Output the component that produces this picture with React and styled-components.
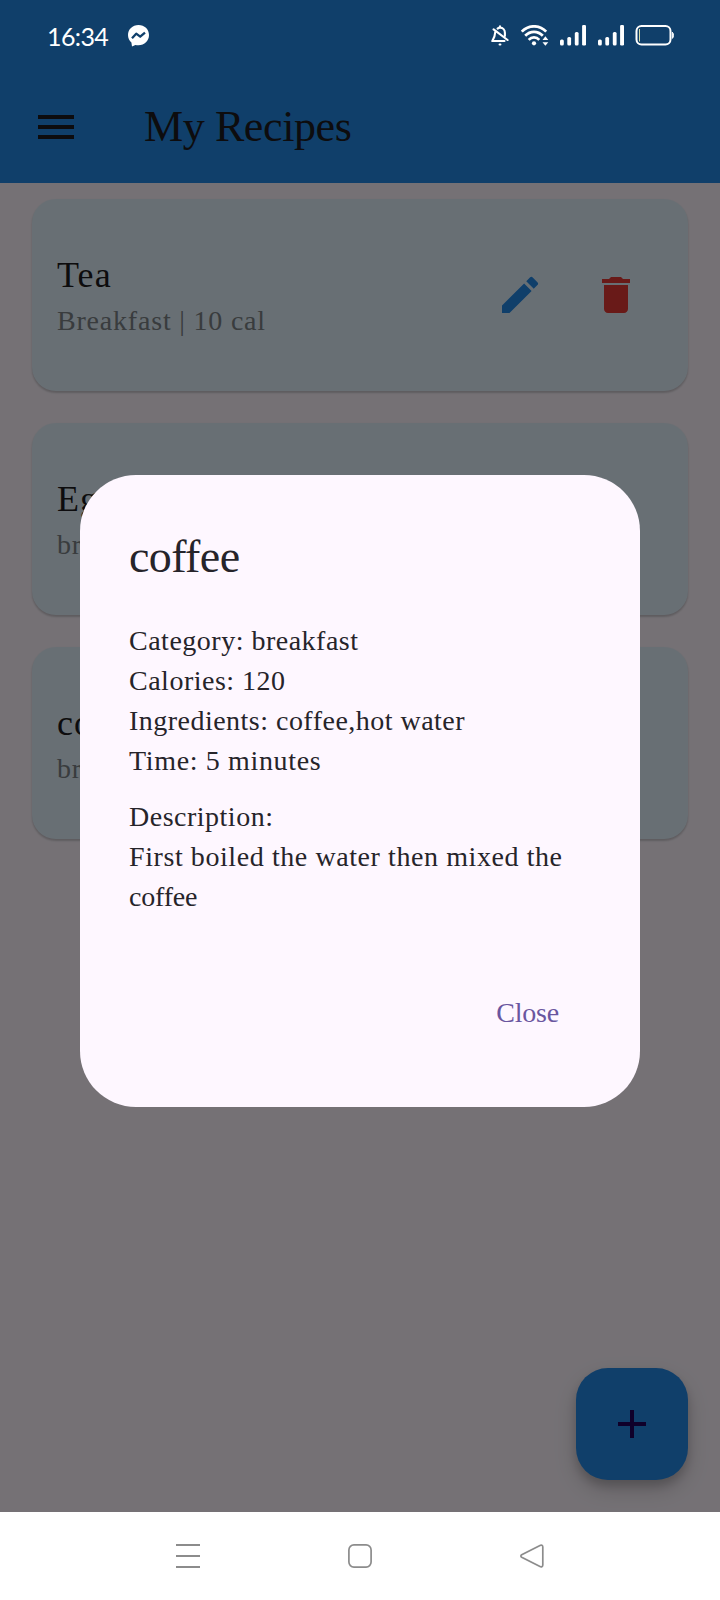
import React from 'react';
import styled, { createGlobalStyle } from 'styled-components';
import { MdAdd, MdDelete, MdEdit, MdMenu } from 'react-icons/md';

const GlobalStyle = createGlobalStyle`
  * { box-sizing: border-box; }
  body { margin: 0; font-family: 'Liberation Serif', serif; }
  svg { display: block; flex: none; }
`;

const Screen = styled.div`
  position: relative;
  display: flex;
  flex-direction: column;
  width: 720px;
  height: 1600px;
  overflow: hidden;
  background: #fef7ff;
`;

const StatusBar = styled.div`
  position: absolute;
  z-index: 3;
  inset: 0 0 auto 0;
  display: flex;
  align-items: center;
  height: 71px;
  padding: 0 45px 0 47px;
  color: #fff;
`;

const Clock = styled.span`
  width: 81px;
  font: 400 25px/30px Lato, sans-serif;
  letter-spacing: -0.6px;
`;

const StatusIcons = styled.div`
  display: flex;
  align-items: center;
  margin-left: auto;
  gap: 12px;
`;

const AppBar = styled.header`
  display: flex;
  align-items: center;
  flex: none;
  height: 183px;
  padding: 71px 32px 0;
  gap: 64px;
  background: #2389e8;
  color: #1d1b20;
`;

const AppTitle = styled.h1`
  margin: 0;
  font-size: 44px;
  font-weight: 400;
  line-height: 56px;
  letter-spacing: -0.4px;
`;

const RecipeList = styled.main`
  display: flex;
  flex: 1;
  flex-direction: column;
  gap: 32px;
  padding: 16px 32px;
`;

const Card = styled.article`
  display: flex;
  align-items: center;
  justify-content: space-between;
  height: 192px;
  padding: 0 24px 0 25px;
  border-radius: 24px;
  background: #e3f2fd;
  box-shadow: 0 2px 2px rgba(0, 0, 0, 0.16), 0 1px 3px rgba(0, 0, 0, 0.06);
`;

const CardText = styled.div`
  display: flex;
  flex-direction: column;
  gap: 2px;
  padding-top: 2px;
`;

const CardTitle = styled.h2`
  margin: 0;
  color: #1d1b20;
  font-size: 36px;
  font-weight: 400;
  line-height: 48px;
  letter-spacing: 1.1px;
`;

const CardMeta = styled.p`
  margin: 0;
  color: #7c8387;
  font-size: 28px;
  line-height: 40px;
  letter-spacing: 0.8px;
`;

const CardActions = styled.div`
  display: flex;
`;

const IconButton = styled.button`
  display: grid;
  place-items: center;
  width: 96px;
  height: 96px;
  padding: 0;
  border: 0;
  background: none;
  color: ${({ $color }) => $color};
`;

const Fab = styled.button`
  position: absolute;
  right: 32px;
  bottom: 120px;
  display: grid;
  place-items: center;
  width: 112px;
  height: 112px;
  padding: 0;
  border: 0;
  border-radius: 32px;
  background: #2389e8;
  color: #21005d;
  box-shadow: 0 6px 10px rgba(0, 0, 0, 0.16), 0 10px 22px rgba(0, 0, 0, 0.17);
`;

const Scrim = styled.div`
  position: absolute;
  z-index: 2;
  inset: 0 0 88px 0;
  display: flex;
  align-items: center;
  justify-content: center;
  padding-top: 70px;
  background: rgba(0, 0, 0, 0.54);
`;

const Dialog = styled.section`
  display: flex;
  flex-direction: column;
  width: 560px;
  padding: 50px 48px 46px 49px;
  border-radius: 56px;
  background: #fef7ff;
  color: #26242a;
`;

const DialogTitle = styled.h2`
  margin: 0 0 32px;
  font-size: 46px;
  font-weight: 400;
  line-height: 64px;
  letter-spacing: -0.6px;
`;

const Details = styled.div`
  display: flex;
  flex-direction: column;
  gap: ${({ $gap }) => $gap || 0}px;
`;

const Line = styled.p`
  margin: 0;
  font-size: 28px;
  line-height: 40px;
  white-space: nowrap;
  letter-spacing: ${({ $tracking }) => $tracking}px;
`;

const DialogActions = styled.div`
  display: flex;
  justify-content: flex-end;
  margin-top: 48px;
`;

const TextButton = styled.button`
  height: 96px;
  padding: 0 33px 0 32px;
  border: 0;
  background: none;
  color: #6a569f;
  font: 28px/40px 'Liberation Serif', serif;
  letter-spacing: -0.2px;
`;

const NavBar = styled.nav`
  display: flex;
  align-items: center;
  justify-content: space-between;
  flex: none;
  height: 88px;
  padding: 0 174px;
  background: #fff;
`;

const recipes = [
  { name: 'Tea', meta: 'Breakfast | 10 cal' },
  { name: 'Egg', meta: 'breakfast' },
  { name: 'coffee', meta: 'breakfast' },
];

const facts = [
  ['Category: breakfast', 0.5],
  ['Calories: 120', 0.5],
  ['Ingredients: coffee,hot water', 0.48],
  ['Time: 5 minutes', 0.65],
];

const steps = [
  ['Description:', 0.5],
  ['First boiled the water then mixed the', 0.58],
  ['coffee', -0.2],
];

const MessengerIcon = () => (
  <svg width="21" height="22" viewBox="0 0 21 22">
    <path d="M10.5 0C4.5 0 0 4.4 0 10c0 3 1.300 5.600 3.400 7.400L4 21.400l3.400-1.500c1 .3 2 .4 3.100.4 6 0 10.500-4.300 10.500-10.200S16.500 0 10.500 0z" fill="#fff" />
    <path d="M4 13.200 8.200 8.700 12.200 11.700 17 7.600" fill="none" stroke="#103f6b" strokeWidth="2.300" strokeLinejoin="round" />
  </svg>
);

const BellOffIcon = () => (
  <svg width="18" height="21" viewBox="0 0 18 21" fill="none" stroke="#fff" strokeWidth="2.100" strokeLinecap="round" strokeLinejoin="round">
    <path d="M9 1.200v1.300M6.600 3.600C7.400 2.900 8 2.600 9 2.600c3 0 4.900 2.300 4.900 5.200v3.200M4.200 7.300C4.100 11 3.500 12.500 1.300 16h12.200M2.600 4.400 16.600 15" />
    <path d="M8.600 19.500h.8" />
  </svg>
);

const WifiIcon = () => (
  <svg width="28" height="21" viewBox="0 0 28 21" fill="none" stroke="#fff" strokeLinecap="butt">
    <path d="M.8 6.700C7.500-.5 18.500-.5 25.200 6.700" strokeWidth="2.700" />
    <path d="M4.200 10.800c5-5.300 12.600-5.300 17.600 0" strokeWidth="2.700" />
    <path d="M7.700 14.800c3-3.200 7.600-3.200 10.600 0" strokeWidth="2.700" />
    <circle cx="13" cy="18.300" r="2.100" fill="#fff" stroke="none" />
    <path d="m21.500 14.900 2.900-3.600 2.900 3.600zM21.500 17.200l2.900 3.600 2.900-3.600z" fill="#fff" stroke="none" />
  </svg>
);

const SignalIcon = () => (
  <svg width="26" height="21" viewBox="0 0 26 21" fill="#fff">
    <rect x="0" y="14.500" width="3.800" height="6" rx="1.500" />
    <rect x="7.300" y="12" width="3.800" height="8.500" rx="1.500" />
    <rect x="14.800" y="7" width="3.800" height="13.500" rx="1.500" />
    <rect x="22.100" y="0" width="3.900" height="20.500" rx="1.200" />
  </svg>
);

const BatteryIcon = () => (
  <svg width="40" height="21" viewBox="0 0 40 21">
    <rect x="1.500" y="1" width="34" height="18.500" rx="5" fill="none" stroke="#fff" strokeWidth="2" />
    <path d="M4.500 4v12.500" stroke="#d9dda9" strokeWidth="1" />
    <path d="M37.300 7.200c1.500.7 1.500 5.500 0 6.200z" fill="#fff" stroke="#fff" />
  </svg>
);

const RecentsIcon = () => (
  <svg width="28" height="26" viewBox="0 0 28 26" stroke="#8c8c8c" strokeWidth="2">
    <path d="M2 2h24M2 13h24M2 24h24" />
  </svg>
);

const HomeIcon = () => (
  <svg width="26" height="26" viewBox="0 0 26 26">
    <rect x="1.900" y="1.900" width="22.200" height="22.200" rx="5" fill="none" stroke="#8c8c8c" strokeWidth="1.700" />
  </svg>
);

const BackIcon = () => (
  <svg width="28" height="26" viewBox="0 0 28 26">
    <path d="M3.700 11.700 22 2.400c1.400-.7 2.800 0 2.800 1.500v18.200c0 1.500-1.400 2.200-2.800 1.500L3.700 14.300c-1.100-.6-1.100-2 0-2.600z" fill="none" stroke="#8c8c8c" strokeWidth="1.700" />
  </svg>
);

const SignalGroup = styled.div`
  display: flex;
  gap: 12px;
  margin: 0 -1px 0 -1px;
`;

export default function App() {
  return (
    <>
      <GlobalStyle />
      <Screen>
        <StatusBar>
          <Clock>16:34</Clock>
          <MessengerIcon />
          <StatusIcons>
            <BellOffIcon />
            <WifiIcon />
            <SignalGroup>
              <SignalIcon />
              <SignalIcon />
            </SignalGroup>
            <BatteryIcon />
          </StatusIcons>
        </StatusBar>

        <AppBar>
          <MdMenu size={48} />
          <AppTitle>My Recipes</AppTitle>
        </AppBar>

        <RecipeList>
          {recipes.map(({ name, meta }) => (
            <Card key={name}>
              <CardText>
                <CardTitle>{name}</CardTitle>
                <CardMeta>{meta}</CardMeta>
              </CardText>
              <CardActions>
                <IconButton $color="#2389e8"><MdEdit size={48} /></IconButton>
                <IconButton $color="#e53935"><MdDelete size={48} /></IconButton>
              </CardActions>
            </Card>
          ))}
        </RecipeList>

        <Fab><MdAdd size={48} /></Fab>

        <NavBar>
          <RecentsIcon />
          <HomeIcon />
          <BackIcon />
        </NavBar>

        <Scrim>
          <Dialog role="dialog">
            <DialogTitle>coffee</DialogTitle>
            <Details $gap={16}>
              <Details>
                {facts.map(([text, tracking]) => <Line key={text} $tracking={tracking}>{text}</Line>)}
              </Details>
              <Details>
                {steps.map(([text, tracking]) => <Line key={text} $tracking={tracking}>{text}</Line>)}
              </Details>
            </Details>
            <DialogActions>
              <TextButton>Close</TextButton>
            </DialogActions>
          </Dialog>
        </Scrim>
      </Screen>
    </>
  );
}
